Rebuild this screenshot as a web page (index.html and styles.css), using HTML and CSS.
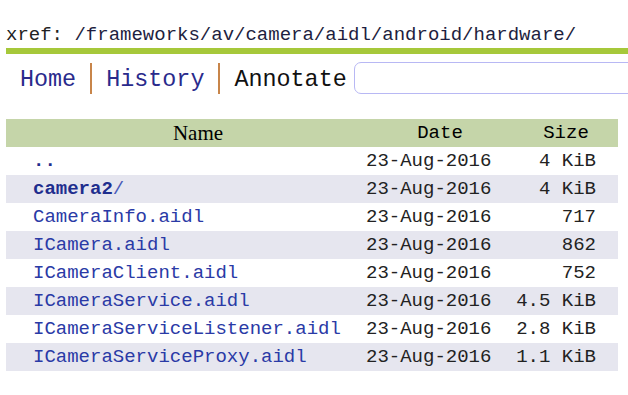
FILE: index.html
```html
<!DOCTYPE html>
<html lang="en">
<head>
  <meta charset="UTF-8">
  <title>xref: /frameworks/av/camera/aidl/android/hardware/</title>
  <link rel="stylesheet" href="styles.css">
</head>
<body>
  <div class="page">
    <div class="pagetitle">
      <span class="label">xref:</span> <a class="path" href="#">/frameworks/av/camera/aidl/android/hardware/</a>
    </div>
    <div class="mast">
      <ul class="menu">
        <li><a href="#">Home</a></li>
        <li><a href="#">History</a></li>
        <li><span class="off">Annotate</span></li>
      </ul>
      <input class="search" type="text">
    </div>
    <table class="dirlist">
      <thead>
        <tr>
          <th class="c-name">Name</th>
          <th class="c-date">Date</th>
          <th class="c-size">Size</th>
        </tr>
      </thead>
      <tbody>
        <tr>
          <td class="c-name"><a class="dir" href="#">..</a></td>
          <td class="c-date">23-Aug-2016</td>
          <td class="c-size">4 KiB</td>
        </tr>
        <tr>
          <td class="c-name"><a class="dir" href="#">camera2</a><span class="slash">/</span></td>
          <td class="c-date">23-Aug-2016</td>
          <td class="c-size">4 KiB</td>
        </tr>
        <tr>
          <td class="c-name"><a href="#">CameraInfo.aidl</a></td>
          <td class="c-date">23-Aug-2016</td>
          <td class="c-size">717</td>
        </tr>
        <tr>
          <td class="c-name"><a href="#">ICamera.aidl</a></td>
          <td class="c-date">23-Aug-2016</td>
          <td class="c-size">862</td>
        </tr>
        <tr>
          <td class="c-name"><a href="#">ICameraClient.aidl</a></td>
          <td class="c-date">23-Aug-2016</td>
          <td class="c-size">752</td>
        </tr>
        <tr>
          <td class="c-name"><a href="#">ICameraService.aidl</a></td>
          <td class="c-date">23-Aug-2016</td>
          <td class="c-size">4.5 KiB</td>
        </tr>
        <tr>
          <td class="c-name"><a href="#">ICameraServiceListener.aidl</a></td>
          <td class="c-date">23-Aug-2016</td>
          <td class="c-size">2.8 KiB</td>
        </tr>
        <tr>
          <td class="c-name"><a href="#">ICameraServiceProxy.aidl</a></td>
          <td class="c-date">23-Aug-2016</td>
          <td class="c-size">1.1 KiB</td>
        </tr>
      </tbody>
    </table>
  </div>
</body>
</html>
```

FILE: styles.css
```css
html,body,div,ul,li,table,th,td{margin:0;padding:0;}
li{
  list-style: none;
}
body{
  background: #fff;
  color: #222;
  font-family: "Liberation Mono", "Noto Sans CJK SC", monospace;
  font-size: 19px;
  overflow: hidden;
}
a{
  text-decoration: none;
}
.page{
  padding: 24px 0 0 6px;
}
.pagetitle{
  height: 24px;
  line-height: 23px;
  white-space: nowrap;
  border-bottom: 6px solid #a6c83a;
}
.pagetitle .label{
  color: #222;
}
.pagetitle .path{
  color: #1e1e40;
}
.mast{
  display: flex;
  align-items: center;
  margin-top: 6px;
  height: 36px;
}
.menu{
  display: flex;
  align-items: center;
  font-size: 23.4px;
  white-space: nowrap;
}
.menu>li{
  height: 31px;
  line-height: 35px;
  padding: 0 14px 0 14px;
  border-left: 2px solid #c8854a;
}
.menu>li:first-child{
  border-left: none;
}
.menu>li:last-child{
  padding-right: 7px;
}
.menu a{
  color: #2a2a8c;
}
.menu .off{
  color: #111;
}
.search{
  flex: none;
  width: 300px;
  height: 32px;
  box-sizing: border-box;
  border: 1px solid #b8b8f4;
  border-radius: 7px;
  background: #fff;
  outline: none;
}
.dirlist{
  margin-top: 23px;
  width: 612px;
  border-collapse: collapse;
  table-layout: fixed;
}
.dirlist th,
.dirlist td{
  height: 28px;
  line-height: 28px;
  white-space: nowrap;
  font-weight: normal;
}
.dirlist thead tr{
  background: #c5d5a9;
}
.dirlist th{
  color: #000;
  text-align: center;
}
.dirlist th.c-name{
  font-family: "Liberation Serif", serif;
  font-size: 21px;
  padding-left: 24px;
}
.dirlist tbody tr:nth-child(even){
  background: #e6e6ef;
}
.c-name{
  width: 336px;
  padding-left: 27px;
}
.c-date{
  width: 148px;
}
.c-size{
  width: 104px;
}
td.c-name{
  padding-left: 27px;
}
td.c-size{
  text-align: right;
  padding-right: 22px;
}
.dirlist td a{
  color: #2a3aa6;
}
.dirlist td a.dir{
  color: #1f2e8e;
  font-weight: bold;
}
.slash{
  color: #4a5ab8;
}
```
